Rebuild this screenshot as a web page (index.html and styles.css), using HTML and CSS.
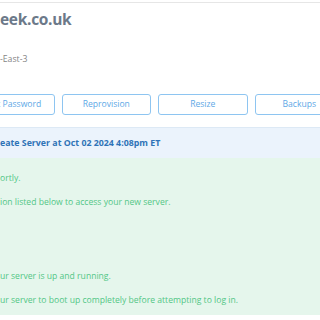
FILE: index.html
```html
<!DOCTYPE html>
<html lang="en">
<head>
  <meta charset="UTF-8">
  <title>Server</title>
  <link rel="stylesheet" href="styles.css">
</head>
<body>

  <div class="server-card">
    <div class="server-head">
      <h1 class="server-name">eek.co.uk</h1>
      <div class="server-region">-East-3</div>
    </div>

    <div class="actions">
      <button class="action-btn">Reset Password</button>
      <button class="action-btn">Reprovision</button>
      <button class="action-btn">Resize</button>
      <button class="action-btn">Backups</button>
    </div>

    <div class="task-bar">eate Server at Oct 02 2024 4:08pm ET</div>

    <div class="task-body">
      <p>ortly.</p>
      <p>ion listed below to access your new server.</p>
      <div class="spacer"></div>
      <p>ur server is up and running.</p>
      <p>ur server to boot up completely before attempting to log in.</p>
    </div>
  </div>

</body>
</html>
```

FILE: styles.css
```css
body {
  font-family: 'Open Sans', sans-serif;
  margin: 0;
  background: #fff;
  overflow: hidden;
}

.server-card {
  margin: 2px 0 0 -35px;
  width: 440px;
  border-top: 1px solid #e6e6e6;
}

.server-head {
  padding: 6px 0 0 35px;
}

.server-name {
  margin: 0;
  font-size: 15.5px;
  line-height: 20px;
  font-weight: 700;
  letter-spacing: -0.3px;
  color: #6c7989;
}

.server-region {
  margin-top: 24px;
  font-size: 8.7px;
  line-height: 12px;
  color: #858585;
}

.actions {
  display: flex;
  gap: 7px;
  width: 379px;
  margin-top: 29px;
}

.action-btn {
  flex: 1;
  height: 21px;
  padding: 0;
  box-sizing: border-box;
  border: 1px solid #8ec5f1;
  border-radius: 3px;
  background: #fff;
  font-family: 'Open Sans', sans-serif;
  font-size: 8.6px;
  line-height: 19px;
  color: #5ea8e6;
}

.task-bar {
  margin-top: 12px;
  padding-left: 35px;
  height: 30px;
  line-height: 30px;
  border-top: 1px solid #dde9f5;
  background: #ebf3fc;
  font-size: 8.8px;
  font-weight: 700;
  color: #2f73b7;
}

.task-body {
  padding: 7.5px 0 2.2px 35px;
  background: #e5f6ec;
  color: #52c686;
  font-size: 8.6px;
}

.task-body p {
  margin: 0;
  line-height: 24.5px;
}

.spacer {
  height: 49px;
}
```
